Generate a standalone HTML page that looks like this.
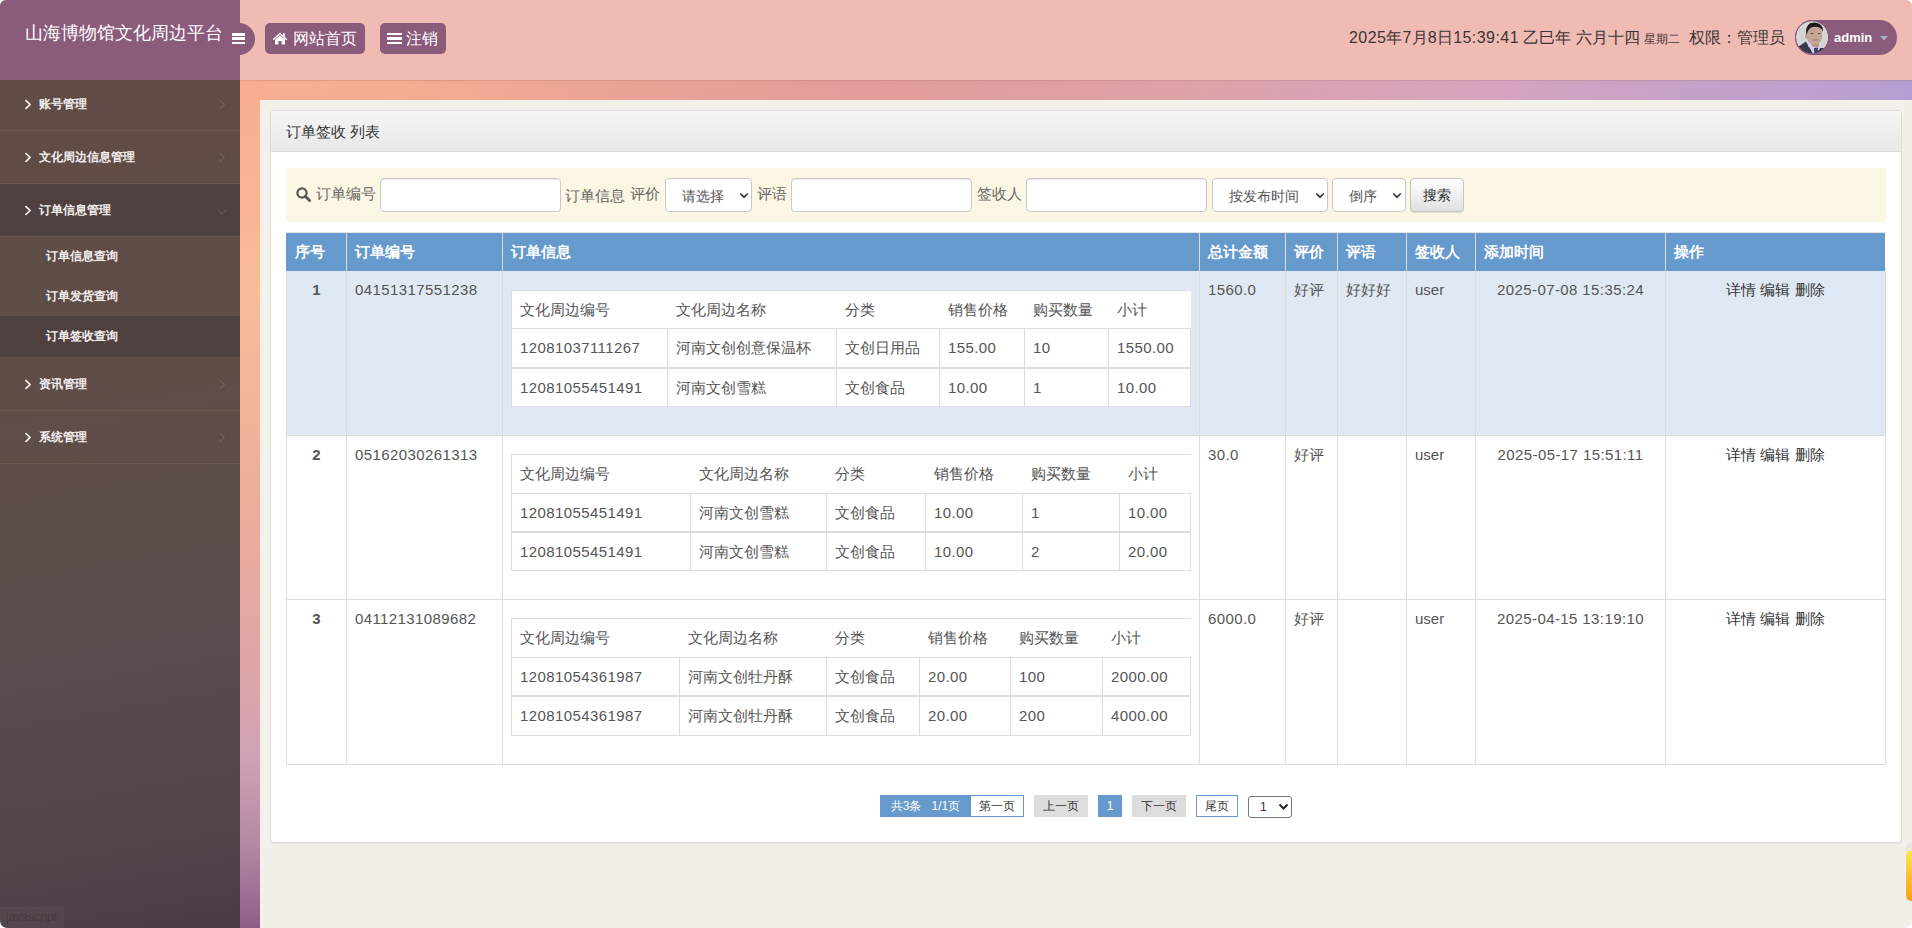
<!DOCTYPE html>
<html><head><meta charset="utf-8">
<style>
*{box-sizing:border-box;margin:0;padding:0}
html,body{width:1912px;height:928px;overflow:hidden;background:#fff;font-family:"Liberation Sans",sans-serif;font-size:15px;color:#555}
#wrap{position:absolute;left:0;top:0;width:1912px;height:928px;border-radius:6px 6px 7px 7px;overflow:hidden;background:#f1f0e9}
#topband{position:absolute;left:260px;top:80px;width:1652px;height:20px;background:linear-gradient(to right,#f8ae90 0%,#f3ab93 12%,#e9a397 23%,#e19d99 38%,#dea2a8 55%,#d5a4bf 75%,#b59fd2 100%)}
#leftband{position:absolute;left:240px;top:80px;width:20px;height:848px;background:linear-gradient(to bottom,#f8ad8e 0%,#fbbb97 25%,#efac9a 50%,#e0a6a6 68%,#d0a2b4 80%,#b589a5 90%,#8f5e88 100%)}
#header{position:absolute;left:0;top:0;width:1912px;height:80px;background:#f0bbb3;box-shadow:0 1px 1px rgba(110,60,40,0.14)}
#logo{position:absolute;left:0;top:0;width:240px;height:80px;background:#8b5b7c}
#logo .t{position:absolute;left:25px;top:21px;font-size:18px;line-height:24px;color:#fff;white-space:nowrap}
#toggle{position:absolute;left:223px;top:23px;width:32px;height:32px;border-radius:16px;background:#8b5b7c}
.bars{position:absolute}
.bars i{display:block;height:2.6px;background:#fff;margin-bottom:1.8px;border-radius:0.5px}
.hbtn{position:absolute;top:23px;height:31px;background:#8b5b7c;border-radius:5px;color:#fff;font-size:16px;line-height:31px;white-space:nowrap}
#sidebar{position:absolute;left:0;top:80px;width:240px;height:848px;background:linear-gradient(170deg,#5f4c45 0%,#5e4d48 40%,#594b4c 70%,#504248 92%,#4a3c43 100%);overflow:hidden;border-bottom-left-radius:6px}
.mi{position:absolute;left:0;width:240px;height:53px;border-bottom:1px solid #6a5750;color:#f4efee;font-size:12px;font-weight:bold}
.mi .tx{position:absolute;left:39px;top:0;line-height:52px;white-space:nowrap}
.mi .ch{position:absolute;left:24px;top:21px}
.mi .rc{position:absolute;left:217px;top:21px}
.smi{position:absolute;left:0;width:240px;height:40px;color:#f4efee;font-size:12px;font-weight:bold}
.smi .tx{position:absolute;left:46px;top:0;line-height:40px;white-space:nowrap}
#status{position:absolute;left:0;top:907px;width:64px;height:21px;background:rgba(255,255,255,0.035);border-top-right-radius:3px;color:#463b40;font-size:12px;line-height:21px;padding-left:6px}
#content{position:absolute;left:260px;top:100px;width:1652px;height:828px;background:#f1f0e9;border-bottom-right-radius:8px}
#panel{position:absolute;left:270px;top:110px;width:1632px;height:733px;background:#fff;border:1px solid #dedcd6;border-radius:4px;box-shadow:0 1px 1px rgba(0,0,0,.05)}
#phead{position:absolute;left:0;top:0;width:1630px;height:41px;background:linear-gradient(#f5f5f5,#e8e8e8);border-bottom:1px solid #ddd;border-radius:3px 3px 0 0;color:#333;font-size:15px;line-height:41px;padding-left:15px}
#search{position:absolute;left:286px;top:168px;width:1600px;height:54px;background:#fcf6e4}
.lbl{position:absolute;color:#666;font-size:15px;line-height:20px;white-space:nowrap}
.inp{position:absolute;top:178px;height:34px;background:#fff;border:1px solid #c9c9c9;border-radius:4px;box-shadow:inset 0 1px 1px rgba(0,0,0,.075)}
.sel{position:absolute;top:178px;height:34px;background:#fff;border:1px solid #c9c9c9;border-radius:4px;color:#555;font-size:14px;line-height:32px;white-space:nowrap}
.sel svg{position:absolute;top:14px}
#sbtn{position:absolute;left:1410px;top:178px;width:54px;height:34px;border:1px solid #c5c5c5;border-radius:4px;background:linear-gradient(#fff,#e0e0e0);box-shadow:0 1px 1px rgba(0,0,0,.1);color:#333;font-size:14px;line-height:32px;text-align:center}

#tbl{position:absolute;left:286px;top:232px;width:1600px;height:532px}
.th{position:absolute;height:38px;background:#6699cc;color:#fff;font-weight:bold;font-size:15px;line-height:38px;padding-left:9px;white-space:nowrap}
.row{position:absolute;left:0;width:1600px;border-bottom:1px solid #ddd}
.td{position:absolute;padding:8px 0 0 8px;line-height:21px;white-space:nowrap}
.num{letter-spacing:0.4px}
.d{letter-spacing:0.45px}
.it{position:absolute;left:225px;width:680px;height:116px}
.ih{position:absolute;left:0;top:0;width:680px;height:38px;border-top:1px solid #ddd;border-left:1px solid #ddd;background:#fff}
.ir{position:absolute;left:0;width:680px;height:39px;background:#fff}
.ic{position:absolute;padding-left:9px;white-space:nowrap}
.ir .ic{position:absolute;padding-left:9px;white-space:nowrap}
.ih .ic{position:absolute;padding-left:9px;white-space:nowrap}

.pg{position:absolute;top:795px;height:22px;font-size:12px;line-height:23px;text-align:center;white-space:nowrap}
</style></head><body>
<div id="wrap">
  <div id="topband"></div>
  <div id="leftband"></div>
  <div id="content"></div>
  <div id="header">
    <div id="logo"><div class="t">山海博物馆文化周边平台</div></div>
    <div id="toggle"><div class="bars" style="left:9px;top:10px;width:13px"><i></i><i></i><i></i></div></div>
    <div class="hbtn" style="left:265px;width:100px"><svg style="position:absolute;left:7px;top:9px" width="16" height="13" viewBox="0 0 16 13"><path d="M8 0.6 L0.6 7.2 L1.6 8.3 L8 2.6 L14.4 8.3 L15.4 7.2 L12.8 4.9 L12.8 1 L11 1 L11 3.3 Z" fill="#fff"/><path d="M3 7.6 L8 3.4 L13 7.6 L13 12.6 L9.6 12.6 L9.6 9 L6.4 9 L6.4 12.6 L3 12.6 Z" fill="#fff"/></svg><span style="position:absolute;left:28px;top:0">网站首页</span></div>
    <div class="hbtn" style="left:380px;width:66px"><div class="bars" style="left:7px;top:9.5px;width:15px"><i style="height:2.6px;margin-bottom:2px"></i><i style="height:2.6px;margin-bottom:2px"></i><i style="height:2.6px"></i></div><span style="position:absolute;left:26px;top:0">注销</span></div>
    <div id="dt" style="position:absolute;left:1349px;top:28px;font-size:16px;line-height:20px;color:#3c3535;white-space:nowrap"><span class="d">2025</span>年<span class="d">7</span>月<span class="d">8</span>日<span class="d">15:39:41</span> 乙巳年 六月十四 <span style="font-size:12px">星期二</span>&nbsp;&nbsp;权限：管理员</div>
    <div id="pill" style="position:absolute;left:1795px;top:20px;width:102px;height:35px;border-radius:17.5px;background:#8b5b7c">
      <svg style="position:absolute;left:-3px;top:-2px" width="40" height="40" viewBox="0 0 40 40"><defs><clipPath id="cp"><circle cx="20.1" cy="19.3" r="16.2"/></clipPath></defs><g clip-path="url(#cp)"><rect width="40" height="40" fill="#d3d6d4"/><path d="M3 31 L14 23.5 L21 33 L27 30 L33 30 L35 40 L3 40 Z" fill="#353a47"/><rect x="16" y="21" width="11" height="8" fill="#b99282"/><path d="M14 23.5 L16.5 22 L21.5 29.5 L27.5 28.5 L28 31 L22 35.5 L20.5 35 Z" fill="#d6cdf0"/><path d="M22 30 L26 29.6 L25.2 36 L22.4 36 Z" fill="#3e3968"/><ellipse cx="14.8" cy="17.8" rx="1.6" ry="2.8" fill="#b08676"/><ellipse cx="22.4" cy="17" rx="8" ry="9.8" fill="#c6a595"/><path d="M14.2 15.5 Q13 5 22 4.6 Q31.5 4.8 31 14 Q29.5 8.6 22.5 8.7 Q16.5 9 14.9 16 Z" fill="#201c1d"/><ellipse cx="20" cy="15.6" rx="1.4" ry="0.7" fill="#5a4440"/><ellipse cx="27" cy="15.6" rx="1.4" ry="0.7" fill="#5a4440"/><path d="M20 22 Q23.5 20.5 27 22 Q23.5 23 20 22 Z" fill="#8f8078"/></g><circle cx="20.1" cy="19.3" r="16.6" fill="none" stroke="#85577a" stroke-width="1"/></svg>
      <div style="position:absolute;left:39px;top:0;line-height:36px;font-size:13px;font-weight:bold;color:#fff">admin</div>
      <svg style="position:absolute;left:85px;top:16px" width="8" height="5" viewBox="0 0 8 5"><path d="M0 0 L8 0 L4 4.5 Z" fill="#a6b1c4"/></svg>
    </div>
  </div>
  <div id="sidebar"><div class="mi" style="top:-2px;"><svg class="ch" width="8" height="11" viewBox="0 0 8 11"><path d="M1.5 1.2 L6 5.5 L1.5 9.8" stroke="#f4efee" stroke-width="1.7" fill="none"/></svg><div class="tx">账号管理</div><svg class="rc" width="10" height="11" viewBox="0 0 10 11"><path d="M2.5 1 L7.5 5.5 L2.5 10" stroke="#7d6a64" stroke-width="1" fill="none"/></svg></div><div class="mi" style="top:51px;"><svg class="ch" width="8" height="11" viewBox="0 0 8 11"><path d="M1.5 1.2 L6 5.5 L1.5 9.8" stroke="#f4efee" stroke-width="1.7" fill="none"/></svg><div class="tx">文化周边信息管理</div><svg class="rc" width="10" height="11" viewBox="0 0 10 11"><path d="M2.5 1 L7.5 5.5 L2.5 10" stroke="#7d6a64" stroke-width="1" fill="none"/></svg></div><div class="mi" style="top:104px;background:#4f413f;"><svg class="ch" width="8" height="11" viewBox="0 0 8 11"><path d="M1.5 1.2 L6 5.5 L1.5 9.8" stroke="#f4efee" stroke-width="1.7" fill="none"/></svg><div class="tx">订单信息管理</div><svg class="rc" width="10" height="11" viewBox="0 0 10 11" style="top:23px"><path d="M0.5 2.5 L5 7 L9.5 2.5" stroke="#6c5a56" stroke-width="1" fill="none"/></svg></div><div class="smi" style="top:156px"><div class="tx">订单信息查询</div></div><div class="smi" style="top:196px"><div class="tx">订单发货查询</div></div><div class="smi" style="top:236px;background:#4f413f;height:41px"><div class="tx">订单签收查询</div></div><div class="mi" style="top:278px;"><svg class="ch" width="8" height="11" viewBox="0 0 8 11"><path d="M1.5 1.2 L6 5.5 L1.5 9.8" stroke="#f4efee" stroke-width="1.7" fill="none"/></svg><div class="tx">资讯管理</div><svg class="rc" width="10" height="11" viewBox="0 0 10 11"><path d="M2.5 1 L7.5 5.5 L2.5 10" stroke="#7d6a64" stroke-width="1" fill="none"/></svg></div><div class="mi" style="top:331px;"><svg class="ch" width="8" height="11" viewBox="0 0 8 11"><path d="M1.5 1.2 L6 5.5 L1.5 9.8" stroke="#f4efee" stroke-width="1.7" fill="none"/></svg><div class="tx">系统管理</div><svg class="rc" width="10" height="11" viewBox="0 0 10 11"><path d="M2.5 1 L7.5 5.5 L2.5 10" stroke="#7d6a64" stroke-width="1" fill="none"/></svg></div></div>
  <div id="status">javascript:</div>
  <div id="panel"><div id="phead">订单签收 列表</div></div>
  <div id="search"></div>
  <svg style="position:absolute;left:296px;top:187px" width="15" height="15" viewBox="0 0 15 15"><circle cx="6" cy="6" r="4.6" stroke="#555" stroke-width="2.2" fill="none"/><path d="M9.3 9.3 L13.6 13.6" stroke="#555" stroke-width="2.8" stroke-linecap="round"/></svg>
  <div class="lbl" style="left:316px;top:184px">订单编号</div>
  <div class="inp" style="left:380px;width:181px"></div>
  <div class="lbl" style="left:565px;top:186px">订单信息</div>
  <div class="lbl" style="left:630px;top:184px">评价</div>
  <div class="sel" style="left:665px;width:87px"><span style="position:absolute;left:16px;top:1px">请选择</span><svg style="position:absolute;left:73px;top:13px" width="10" height="7" viewBox="0 0 10 7"><path d="M1.2 1.5 L5 5.2 L8.8 1.5" stroke="#3a3a3a" stroke-width="1.7" fill="none"/></svg></div>
  <div class="lbl" style="left:757px;top:184px">评语</div>
  <div class="inp" style="left:791px;width:181px"></div>
  <div class="lbl" style="left:977px;top:184px">签收人</div>
  <div class="inp" style="left:1026px;width:181px"></div>
  <div class="sel" style="left:1212px;width:116px"><span style="position:absolute;left:16px;top:1px">按发布时间</span><svg style="position:absolute;left:102px;top:13px" width="10" height="7" viewBox="0 0 10 7"><path d="M1.2 1.5 L5 5.2 L8.8 1.5" stroke="#3a3a3a" stroke-width="1.7" fill="none"/></svg></div>
  <div class="sel" style="left:1332px;width:74px"><span style="position:absolute;left:16px;top:1px">倒序</span><svg style="position:absolute;left:59px;top:13px" width="10" height="7" viewBox="0 0 10 7"><path d="M1.2 1.5 L5 5.2 L8.8 1.5" stroke="#3a3a3a" stroke-width="1.7" fill="none"/></svg></div>
  <div id="sbtn">搜索</div>
<div id="tbl" style="position:absolute;left:0;top:0;width:1912px;height:928px"><div style="position:absolute;left:286px;top:232px;width:1600px;height:1px;background:#e3e3e3"></div><div class="th" style="left:286px;top:233px;width:60px">序号</div><div class="th" style="left:346px;top:233px;width:156px">订单编号</div><div class="th" style="left:502px;top:233px;width:697px">订单信息</div><div class="th" style="left:1199px;top:233px;width:86px">总计金额</div><div class="th" style="left:1285px;top:233px;width:52px">评价</div><div class="th" style="left:1337px;top:233px;width:69px">评语</div><div class="th" style="left:1406px;top:233px;width:69px">签收人</div><div class="th" style="left:1475px;top:233px;width:190px">添加时间</div><div class="th" style="left:1665px;top:233px;width:220px">操作</div><div style="position:absolute;left:346px;top:233px;width:1px;height:38px;background:#dcdcdc"></div><div style="position:absolute;left:502px;top:233px;width:1px;height:38px;background:#dcdcdc"></div><div style="position:absolute;left:1199px;top:233px;width:1px;height:38px;background:#dcdcdc"></div><div style="position:absolute;left:1285px;top:233px;width:1px;height:38px;background:#dcdcdc"></div><div style="position:absolute;left:1337px;top:233px;width:1px;height:38px;background:#dcdcdc"></div><div style="position:absolute;left:1406px;top:233px;width:1px;height:38px;background:#dcdcdc"></div><div style="position:absolute;left:1475px;top:233px;width:1px;height:38px;background:#dcdcdc"></div><div style="position:absolute;left:1665px;top:233px;width:1px;height:38px;background:#dcdcdc"></div><div style="position:absolute;left:286px;top:271px;width:1599px;height:164px;background:#e0e9f3"></div><div style="position:absolute;left:286px;top:435px;width:1600px;height:1px;background:#dddddd"></div><div style="position:absolute;left:286px;top:271px;width:1px;height:164px;background:#dddddd"></div><div style="position:absolute;left:346px;top:271px;width:1px;height:164px;background:#dddddd"></div><div style="position:absolute;left:502px;top:271px;width:1px;height:164px;background:#dddddd"></div><div style="position:absolute;left:1199px;top:271px;width:1px;height:164px;background:#dddddd"></div><div style="position:absolute;left:1285px;top:271px;width:1px;height:164px;background:#dddddd"></div><div style="position:absolute;left:1337px;top:271px;width:1px;height:164px;background:#dddddd"></div><div style="position:absolute;left:1406px;top:271px;width:1px;height:164px;background:#dddddd"></div><div style="position:absolute;left:1475px;top:271px;width:1px;height:164px;background:#dddddd"></div><div style="position:absolute;left:1665px;top:271px;width:1px;height:164px;background:#dddddd"></div><div style="position:absolute;left:1885px;top:271px;width:1px;height:164px;background:#dddddd"></div><div class="td" style="left:287px;top:271px;width:59px;text-align:center;padding-left:0;font-weight:bold;">1</div><div class="td" style="left:347px;top:271px;width:155px;"><span class="num">04151317551238</span></div><div class="td" style="left:1200px;top:271px;width:85px;"><span class="num">1560.0</span></div><div class="td" style="left:1286px;top:271px;width:51px;">好评</div><div class="td" style="left:1338px;top:271px;width:68px;">好好好</div><div class="td" style="left:1407px;top:271px;width:68px;">user</div><div class="td" style="left:1476px;top:271px;width:189px;text-align:center;padding-left:0;"><span class="num">2025-07-08 15:35:24</span></div><div class="td" style="left:1666px;top:271px;width:219px;text-align:center;padding-left:0;color:#333;">详情 编辑 删除</div><div style="position:absolute;left:511px;top:290px;width:680px;height:38px;background:#fff;border-top:1px solid #dddddd;border-left:1px solid #dddddd"></div><div class="ic" style="left:511px;top:290px;height:38px;line-height:39px;padding-left:9px">文化周边编号</div><div class="ic" style="left:668px;top:290px;height:38px;line-height:39px;padding-left:8px">文化周边名称</div><div class="ic" style="left:837px;top:290px;height:38px;line-height:39px;padding-left:8px">分类</div><div class="ic" style="left:940px;top:290px;height:38px;line-height:39px;padding-left:8px">销售价格</div><div class="ic" style="left:1025px;top:290px;height:38px;line-height:39px;padding-left:8px">购买数量</div><div class="ic" style="left:1109px;top:290px;height:38px;line-height:39px;padding-left:8px">小计</div><div style="position:absolute;left:511px;top:328px;width:680px;height:40px;background:#fff;border:1px solid #dddddd"></div><div class="ic" style="left:511px;top:328px;height:40px;line-height:40px;padding-left:9px"><span class="num">12081037111267</span></div><div style="position:absolute;left:667px;top:328px;width:1px;height:40px;background:#dddddd"></div><div class="ic" style="left:668px;top:328px;height:40px;line-height:40px;padding-left:8px">河南文创创意保温杯</div><div style="position:absolute;left:836px;top:328px;width:1px;height:40px;background:#dddddd"></div><div class="ic" style="left:837px;top:328px;height:40px;line-height:40px;padding-left:8px">文创日用品</div><div style="position:absolute;left:939px;top:328px;width:1px;height:40px;background:#dddddd"></div><div class="ic" style="left:940px;top:328px;height:40px;line-height:40px;padding-left:8px"><span class="num">155.00</span></div><div style="position:absolute;left:1024px;top:328px;width:1px;height:40px;background:#dddddd"></div><div class="ic" style="left:1025px;top:328px;height:40px;line-height:40px;padding-left:8px"><span class="num">10</span></div><div style="position:absolute;left:1108px;top:328px;width:1px;height:40px;background:#dddddd"></div><div class="ic" style="left:1109px;top:328px;height:40px;line-height:40px;padding-left:8px"><span class="num">1550.00</span></div><div style="position:absolute;left:511px;top:368px;width:680px;height:39px;background:#fff;border:1px solid #dddddd"></div><div class="ic" style="left:511px;top:368px;height:39px;line-height:39px;padding-left:9px"><span class="num">12081055451491</span></div><div style="position:absolute;left:667px;top:368px;width:1px;height:39px;background:#dddddd"></div><div class="ic" style="left:668px;top:368px;height:39px;line-height:39px;padding-left:8px">河南文创雪糕</div><div style="position:absolute;left:836px;top:368px;width:1px;height:39px;background:#dddddd"></div><div class="ic" style="left:837px;top:368px;height:39px;line-height:39px;padding-left:8px">文创食品</div><div style="position:absolute;left:939px;top:368px;width:1px;height:39px;background:#dddddd"></div><div class="ic" style="left:940px;top:368px;height:39px;line-height:39px;padding-left:8px"><span class="num">10.00</span></div><div style="position:absolute;left:1024px;top:368px;width:1px;height:39px;background:#dddddd"></div><div class="ic" style="left:1025px;top:368px;height:39px;line-height:39px;padding-left:8px"><span class="num">1</span></div><div style="position:absolute;left:1108px;top:368px;width:1px;height:39px;background:#dddddd"></div><div class="ic" style="left:1109px;top:368px;height:39px;line-height:39px;padding-left:8px"><span class="num">10.00</span></div><div style="position:absolute;left:286px;top:436px;width:1599px;height:163px;background:#fff"></div><div style="position:absolute;left:286px;top:599px;width:1600px;height:1px;background:#dddddd"></div><div style="position:absolute;left:286px;top:436px;width:1px;height:163px;background:#dddddd"></div><div style="position:absolute;left:346px;top:436px;width:1px;height:163px;background:#dddddd"></div><div style="position:absolute;left:502px;top:436px;width:1px;height:163px;background:#dddddd"></div><div style="position:absolute;left:1199px;top:436px;width:1px;height:163px;background:#dddddd"></div><div style="position:absolute;left:1285px;top:436px;width:1px;height:163px;background:#dddddd"></div><div style="position:absolute;left:1337px;top:436px;width:1px;height:163px;background:#dddddd"></div><div style="position:absolute;left:1406px;top:436px;width:1px;height:163px;background:#dddddd"></div><div style="position:absolute;left:1475px;top:436px;width:1px;height:163px;background:#dddddd"></div><div style="position:absolute;left:1665px;top:436px;width:1px;height:163px;background:#dddddd"></div><div style="position:absolute;left:1885px;top:436px;width:1px;height:163px;background:#dddddd"></div><div class="td" style="left:287px;top:436px;width:59px;text-align:center;padding-left:0;font-weight:bold;">2</div><div class="td" style="left:347px;top:436px;width:155px;"><span class="num">05162030261313</span></div><div class="td" style="left:1200px;top:436px;width:85px;"><span class="num">30.0</span></div><div class="td" style="left:1286px;top:436px;width:51px;">好评</div><div class="td" style="left:1338px;top:436px;width:68px;"></div><div class="td" style="left:1407px;top:436px;width:68px;">user</div><div class="td" style="left:1476px;top:436px;width:189px;text-align:center;padding-left:0;"><span class="num">2025-05-17 15:51:11</span></div><div class="td" style="left:1666px;top:436px;width:219px;text-align:center;padding-left:0;color:#333;">详情 编辑 删除</div><div style="position:absolute;left:511px;top:454px;width:680px;height:39px;background:#fff;border-top:1px solid #dddddd;border-left:1px solid #dddddd"></div><div class="ic" style="left:511px;top:454px;height:39px;line-height:40px;padding-left:9px">文化周边编号</div><div class="ic" style="left:691px;top:454px;height:39px;line-height:40px;padding-left:8px">文化周边名称</div><div class="ic" style="left:827px;top:454px;height:39px;line-height:40px;padding-left:8px">分类</div><div class="ic" style="left:926px;top:454px;height:39px;line-height:40px;padding-left:8px">销售价格</div><div class="ic" style="left:1023px;top:454px;height:39px;line-height:40px;padding-left:8px">购买数量</div><div class="ic" style="left:1120px;top:454px;height:39px;line-height:40px;padding-left:8px">小计</div><div style="position:absolute;left:511px;top:493px;width:680px;height:39px;background:#fff;border:1px solid #dddddd"></div><div class="ic" style="left:511px;top:493px;height:39px;line-height:39px;padding-left:9px"><span class="num">12081055451491</span></div><div style="position:absolute;left:690px;top:493px;width:1px;height:39px;background:#dddddd"></div><div class="ic" style="left:691px;top:493px;height:39px;line-height:39px;padding-left:8px">河南文创雪糕</div><div style="position:absolute;left:826px;top:493px;width:1px;height:39px;background:#dddddd"></div><div class="ic" style="left:827px;top:493px;height:39px;line-height:39px;padding-left:8px">文创食品</div><div style="position:absolute;left:925px;top:493px;width:1px;height:39px;background:#dddddd"></div><div class="ic" style="left:926px;top:493px;height:39px;line-height:39px;padding-left:8px"><span class="num">10.00</span></div><div style="position:absolute;left:1022px;top:493px;width:1px;height:39px;background:#dddddd"></div><div class="ic" style="left:1023px;top:493px;height:39px;line-height:39px;padding-left:8px"><span class="num">1</span></div><div style="position:absolute;left:1119px;top:493px;width:1px;height:39px;background:#dddddd"></div><div class="ic" style="left:1120px;top:493px;height:39px;line-height:39px;padding-left:8px"><span class="num">10.00</span></div><div style="position:absolute;left:511px;top:532px;width:680px;height:39px;background:#fff;border:1px solid #dddddd"></div><div class="ic" style="left:511px;top:532px;height:39px;line-height:39px;padding-left:9px"><span class="num">12081055451491</span></div><div style="position:absolute;left:690px;top:532px;width:1px;height:39px;background:#dddddd"></div><div class="ic" style="left:691px;top:532px;height:39px;line-height:39px;padding-left:8px">河南文创雪糕</div><div style="position:absolute;left:826px;top:532px;width:1px;height:39px;background:#dddddd"></div><div class="ic" style="left:827px;top:532px;height:39px;line-height:39px;padding-left:8px">文创食品</div><div style="position:absolute;left:925px;top:532px;width:1px;height:39px;background:#dddddd"></div><div class="ic" style="left:926px;top:532px;height:39px;line-height:39px;padding-left:8px"><span class="num">10.00</span></div><div style="position:absolute;left:1022px;top:532px;width:1px;height:39px;background:#dddddd"></div><div class="ic" style="left:1023px;top:532px;height:39px;line-height:39px;padding-left:8px"><span class="num">2</span></div><div style="position:absolute;left:1119px;top:532px;width:1px;height:39px;background:#dddddd"></div><div class="ic" style="left:1120px;top:532px;height:39px;line-height:39px;padding-left:8px"><span class="num">20.00</span></div><div style="position:absolute;left:286px;top:600px;width:1599px;height:164px;background:#fff"></div><div style="position:absolute;left:286px;top:764px;width:1600px;height:1px;background:#dddddd"></div><div style="position:absolute;left:286px;top:600px;width:1px;height:164px;background:#dddddd"></div><div style="position:absolute;left:346px;top:600px;width:1px;height:164px;background:#dddddd"></div><div style="position:absolute;left:502px;top:600px;width:1px;height:164px;background:#dddddd"></div><div style="position:absolute;left:1199px;top:600px;width:1px;height:164px;background:#dddddd"></div><div style="position:absolute;left:1285px;top:600px;width:1px;height:164px;background:#dddddd"></div><div style="position:absolute;left:1337px;top:600px;width:1px;height:164px;background:#dddddd"></div><div style="position:absolute;left:1406px;top:600px;width:1px;height:164px;background:#dddddd"></div><div style="position:absolute;left:1475px;top:600px;width:1px;height:164px;background:#dddddd"></div><div style="position:absolute;left:1665px;top:600px;width:1px;height:164px;background:#dddddd"></div><div style="position:absolute;left:1885px;top:600px;width:1px;height:164px;background:#dddddd"></div><div class="td" style="left:287px;top:600px;width:59px;text-align:center;padding-left:0;font-weight:bold;">3</div><div class="td" style="left:347px;top:600px;width:155px;"><span class="num">04112131089682</span></div><div class="td" style="left:1200px;top:600px;width:85px;"><span class="num">6000.0</span></div><div class="td" style="left:1286px;top:600px;width:51px;">好评</div><div class="td" style="left:1338px;top:600px;width:68px;"></div><div class="td" style="left:1407px;top:600px;width:68px;">user</div><div class="td" style="left:1476px;top:600px;width:189px;text-align:center;padding-left:0;"><span class="num">2025-04-15 13:19:10</span></div><div class="td" style="left:1666px;top:600px;width:219px;text-align:center;padding-left:0;color:#333;">详情 编辑 删除</div><div style="position:absolute;left:511px;top:618px;width:680px;height:39px;background:#fff;border-top:1px solid #dddddd;border-left:1px solid #dddddd"></div><div class="ic" style="left:511px;top:618px;height:39px;line-height:40px;padding-left:9px">文化周边编号</div><div class="ic" style="left:680px;top:618px;height:39px;line-height:40px;padding-left:8px">文化周边名称</div><div class="ic" style="left:827px;top:618px;height:39px;line-height:40px;padding-left:8px">分类</div><div class="ic" style="left:920px;top:618px;height:39px;line-height:40px;padding-left:8px">销售价格</div><div class="ic" style="left:1011px;top:618px;height:39px;line-height:40px;padding-left:8px">购买数量</div><div class="ic" style="left:1103px;top:618px;height:39px;line-height:40px;padding-left:8px">小计</div><div style="position:absolute;left:511px;top:657px;width:680px;height:39px;background:#fff;border:1px solid #dddddd"></div><div class="ic" style="left:511px;top:657px;height:39px;line-height:39px;padding-left:9px"><span class="num">12081054361987</span></div><div style="position:absolute;left:679px;top:657px;width:1px;height:39px;background:#dddddd"></div><div class="ic" style="left:680px;top:657px;height:39px;line-height:39px;padding-left:8px">河南文创牡丹酥</div><div style="position:absolute;left:826px;top:657px;width:1px;height:39px;background:#dddddd"></div><div class="ic" style="left:827px;top:657px;height:39px;line-height:39px;padding-left:8px">文创食品</div><div style="position:absolute;left:919px;top:657px;width:1px;height:39px;background:#dddddd"></div><div class="ic" style="left:920px;top:657px;height:39px;line-height:39px;padding-left:8px"><span class="num">20.00</span></div><div style="position:absolute;left:1010px;top:657px;width:1px;height:39px;background:#dddddd"></div><div class="ic" style="left:1011px;top:657px;height:39px;line-height:39px;padding-left:8px"><span class="num">100</span></div><div style="position:absolute;left:1102px;top:657px;width:1px;height:39px;background:#dddddd"></div><div class="ic" style="left:1103px;top:657px;height:39px;line-height:39px;padding-left:8px"><span class="num">2000.00</span></div><div style="position:absolute;left:511px;top:696px;width:680px;height:40px;background:#fff;border:1px solid #dddddd"></div><div class="ic" style="left:511px;top:696px;height:40px;line-height:40px;padding-left:9px"><span class="num">12081054361987</span></div><div style="position:absolute;left:679px;top:696px;width:1px;height:40px;background:#dddddd"></div><div class="ic" style="left:680px;top:696px;height:40px;line-height:40px;padding-left:8px">河南文创牡丹酥</div><div style="position:absolute;left:826px;top:696px;width:1px;height:40px;background:#dddddd"></div><div class="ic" style="left:827px;top:696px;height:40px;line-height:40px;padding-left:8px">文创食品</div><div style="position:absolute;left:919px;top:696px;width:1px;height:40px;background:#dddddd"></div><div class="ic" style="left:920px;top:696px;height:40px;line-height:40px;padding-left:8px"><span class="num">20.00</span></div><div style="position:absolute;left:1010px;top:696px;width:1px;height:40px;background:#dddddd"></div><div class="ic" style="left:1011px;top:696px;height:40px;line-height:40px;padding-left:8px"><span class="num">200</span></div><div style="position:absolute;left:1102px;top:696px;width:1px;height:40px;background:#dddddd"></div><div class="ic" style="left:1103px;top:696px;height:40px;line-height:40px;padding-left:8px"><span class="num">4000.00</span></div></div>
  <div class="pg" style="left:880px;width:91px;background:#6699cc;color:#fff;padding-left:0">共3条&nbsp;&nbsp;&nbsp;1/1页</div>
  <div class="pg" style="left:970px;width:54px;background:#fff;border:1px solid #6699cc;color:#333;line-height:21px">第一页</div>
  <div class="pg" style="left:1034px;width:54px;background:#ddd;color:#333">上一页</div>
  <div class="pg" style="left:1098px;width:24px;background:#6699cc;color:#fff">1</div>
  <div class="pg" style="left:1132px;width:54px;background:#ddd;color:#333">下一页</div>
  <div class="pg" style="left:1196px;width:42px;background:#fff;border:1px solid #6699cc;color:#333;line-height:21px">尾页</div>
  <div class="pg" style="left:1248px;top:796px;width:44px;background:#fff;border:1px solid #767676;border-radius:3px;color:#333;line-height:20px;text-align:left;padding-left:11px">1<svg style="position:absolute;left:29px;top:6px" width="11" height="8" viewBox="0 0 11 8"><path d="M1.5 1.5 L5.5 5.5 L9.5 1.5" stroke="#222" stroke-width="2" fill="none"/></svg></div>
  <div style="position:absolute;left:1906px;top:850px;width:8px;height:51px;border-radius:5px 0 0 5px;background:linear-gradient(#ffe55a,#ff9f14)"></div>
  <div style="position:absolute;left:1906px;top:843px;width:8px;height:8px;border-radius:5px 0 0 0;background:#e6e4df"></div>

</div>
</body></html>
